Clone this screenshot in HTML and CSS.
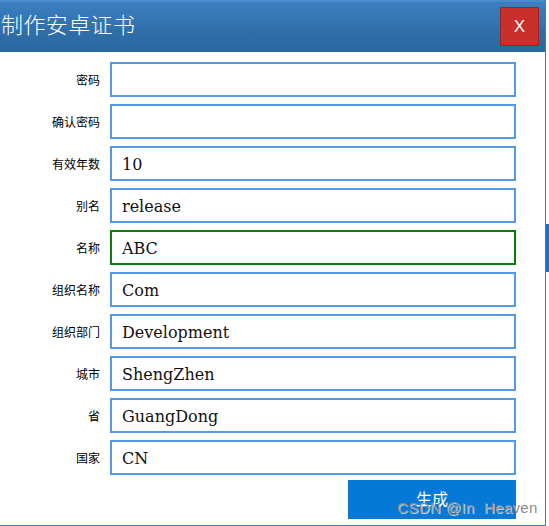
FILE: index.html
```html
<!DOCTYPE html>
<html lang="zh">
<head>
<meta charset="utf-8">
<title>制作安卓证书</title>
<link rel="stylesheet" href="styles.css">
</head>
<body>
<div class="backdrop-strip"></div>
<div class="dialog">
  <div class="titlebar">
    <div class="title">制作安卓证书</div>
    <button class="close">X</button>
  </div>
  <form class="form">
    <div class="row"><label>密码</label><input class="field" type="text" value=""></div>
    <div class="row"><label>确认密码</label><input class="field" type="text" value=""></div>
    <div class="row"><label>有效年数</label><input class="field" type="text" value="10"></div>
    <div class="row"><label>别名</label><input class="field" type="text" value="release"></div>
    <div class="row"><label>名称</label><input class="field focused" type="text" value="ABC"></div>
    <div class="row"><label>组织名称</label><input class="field" type="text" value="Com"></div>
    <div class="row"><label>组织部门</label><input class="field" type="text" value="Development"></div>
    <div class="row"><label>城市</label><input class="field" type="text" value="ShengZhen"></div>
    <div class="row"><label>省</label><input class="field" type="text" value="GuangDong"></div>
    <div class="row"><label>国家</label><input class="field" type="text" value="CN"></div>
    <div class="actions">
      <button type="button" class="generate">生成</button>
    </div>
  </form>
  <div class="watermark">CSDN @In  Heaven</div>
</div>
</body>
</html>
```

FILE: styles.css
```css
html, body {
  margin: 0;
  padding: 0;
  background: #ffffff;
  width: 549px;
  height: 526px;
  overflow: hidden;
  position: relative;
}

.backdrop-strip {
  position: absolute;
  left: 546px;
  top: 224px;
  width: 3px;
  height: 48px;
  background: #0a74d0;
}

.dialog {
  position: relative;
  width: 545px;
  height: 525px;
  border-right: 1px solid #3b7cc0;
  border-bottom: 1px solid #3b7cc0;
  background: #ffffff;
  display: flex;
  flex-direction: column;
}

.titlebar {
  height: 52px;
  flex: none;
  display: flex;
  align-items: center;
  justify-content: space-between;
  background: linear-gradient(to bottom, #3c7fc0 0%, #2f6ea9 60%, #2b68a1 100%);
  border-top: 2px solid #4a8ad0;
  box-sizing: border-box;
}

.title {
  color: #ffffff;
  font-family: "Noto Sans CJK SC", "DejaVu Sans", sans-serif;
  font-size: 22px;
  font-weight: 300;
  padding-left: 1px;
  margin-top: -9px;
  letter-spacing: 0.4px;
}

.close {
  width: 39px;
  height: 39px;
  margin-right: 6px;
  margin-top: -1px;
  background: #c9302c;
  border: 1px solid #8e1e1e;
  outline: 1px dotted #a52a2a;
  outline-offset: -1px;
  color: #ffffff;
  font-family: "Liberation Sans", Arial, sans-serif;
  font-size: 17px;
  padding: 0;
  display: flex;
  align-items: center;
  justify-content: center;
}

.form {
  margin: 0;
  padding-top: 10px;
  display: flex;
  flex-direction: column;
  gap: 7px;
}

.row {
  display: flex;
  align-items: center;
  height: 35px;
}

.row label {
  width: 100px;
  flex: none;
  text-align: right;
  font-family: "Noto Sans CJK SC", "DejaVu Sans", sans-serif;
  font-size: 12px;
  color: #000000;
  margin-right: 10px;
}

.field {
  width: 406px;
  height: 35px;
  box-sizing: border-box;
  border: 2px solid #5598e6;
  padding: 1px 0 0 10px;
  margin: 0;
  font-family: "DejaVu Serif", "Liberation Serif", serif;
  font-size: 16px;
  color: #111111;
  background: #ffffff;
  outline: none;
}

.field.focused {
  border-color: #0a7d0a;
}

.actions {
  display: flex;
  justify-content: flex-end;
  padding-right: 29px;
  margin-top: -2px;
}

.generate {
  width: 168px;
  height: 39px;
  background: #0678d6;
  border: none;
  color: #ffffff;
  font-family: "Noto Sans CJK SC", "DejaVu Sans", sans-serif;
  font-size: 16px;
  padding: 0 0 3px 0;
}

.watermark {
  position: absolute;
  left: 397px;
  top: 499px;
  white-space: pre;
  font-family: "Liberation Sans", Arial, sans-serif;
  font-size: 15px;
  letter-spacing: 0.4px;
  color: #8c8c8c;
  text-shadow: 1px 1px 0 rgba(255, 255, 255, 0.7);
  pointer-events: none;
}
```
